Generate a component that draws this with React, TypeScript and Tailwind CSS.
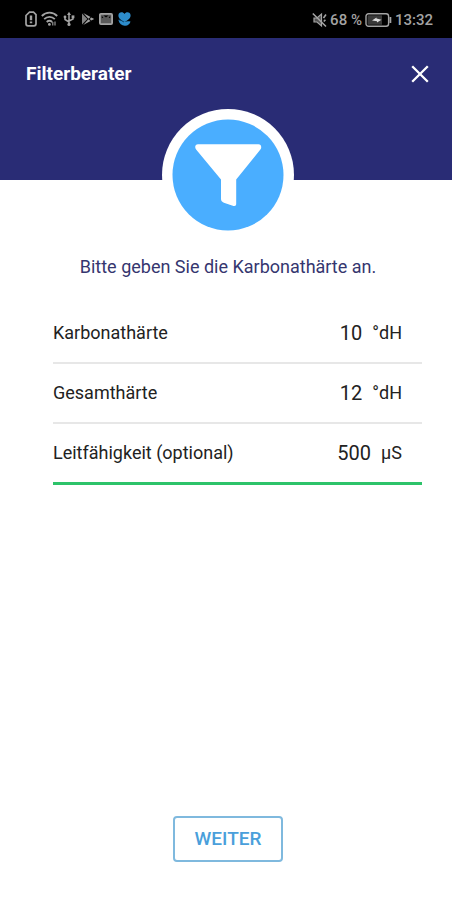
import React, { useState } from 'react';

interface Measurement {
  id: string;
  label: string;
  unit: string;
  initial: string;
}

const measurements: Measurement[] = [
  { id: 'karbonathaerte', label: 'Karbonathärte', unit: '°dH', initial: '10' },
  { id: 'gesamthaerte', label: 'Gesamthärte', unit: '°dH', initial: '12' },
  { id: 'leitfaehigkeit', label: 'Leitfähigkeit (optional)', unit: 'µS', initial: '500' },
];

function SimIcon() {
  return (
    <svg width="12" height="16" viewBox="0 0 12 16" fill="none" stroke="currentColor" strokeWidth="1.7" aria-hidden="true">
      <path d="M4.5 1.2H8.5L11 3.5v9.3a2 2 0 0 1-2 2H3a2 2 0 0 1-2-2V4.5z" />
      <path d="M6 4.5v4.8M6 10.4v1.8" strokeWidth="2.4" />
    </svg>
  );
}

function WifiIcon() {
  return (
    <svg width="18" height="16" viewBox="0 0 18 16" fill="none" stroke="currentColor" strokeWidth="1.8" aria-hidden="true">
      <path d="M.8 5c4.3-4.4 11.1-4.4 15.4 0M3.2 8.2c3-3 7.6-3 10.6 0M5.7 11c1.7-1.5 3.8-1.5 5.5 0" />
      <circle cx="8.4" cy="13.4" r="1.4" fill="currentColor" stroke="none" />
      <path d="M11.8 11v3.4M14 10.5v4" strokeWidth="1.1" />
    </svg>
  );
}

function UsbIcon() {
  return (
    <svg width="14" height="16" viewBox="0 0 14 16" fill="none" stroke="currentColor" strokeWidth="1.5" aria-hidden="true">
      <path d="M6 3v10M2 6v2.5L6 11M10 5.5V8L6 10" />
      <path d="M6 .8 8 4H4z" fill="currentColor" stroke="none" />
      <circle cx="6" cy="13.4" r="1.6" fill="currentColor" stroke="none" />
      <circle cx="2" cy="6" r="1.4" fill="currentColor" stroke="none" />
      <path d="M8.6 4.4h2.8v2.8H8.6z" fill="currentColor" stroke="none" />
    </svg>
  );
}

function PlayStoreIcon() {
  return (
    <svg width="14" height="16" viewBox="0 0 14 16" fill="currentColor" aria-hidden="true">
      <path d="M1 2.4 6.4 8 1 13.6z" fillOpacity="0.8" />
      <path d="M2.2 2 9.6 6 7.4 7.8zM2.2 14l7.4-4-2.2-1.8zM10.4 6.4 13.2 8l-2.8 1.6L8.6 8z" />
    </svg>
  );
}

function MailIcon() {
  return (
    <svg width="14" height="16" viewBox="0 0 14 16" fill="none" stroke="currentColor" strokeWidth="1.8" aria-hidden="true">
      <rect x=".9" y="2.9" width="12.2" height="10.2" rx="1" fill="currentColor" fillOpacity="0.55" />
      <path d="M2.8 5v2.2l1.6-.6zM11.2 5v2.2l-1.6-.6zM4.5 4.4h5L7 6.6z" fill="#000" stroke="none" />
    </svg>
  );
}

function HeartIcon() {
  return (
    <svg width="15" height="16" viewBox="0 0 15 16" fill="#2d8ccb" aria-hidden="true">
      <path d="M7.5 3C6 .4 1.4.9 1.4 4.4c0 3 3 4.8 6.1 6.6 3.1-1.8 6.1-3.6 6.1-6.6C13.6.9 9 .4 7.5 3z" />
      <path d="M1.4 9c2.2.2 4.2 1.2 5.8 2 1.8-.8 4-1 6.3-.4-.6 2.8-3 4.5-5.8 4.2-3-.2-5.4-2-6.3-5.8z" />
      <path d="M1.6 8.6c2 .4 4 1.4 5.4 2.6" fill="none" stroke="#0a4674" strokeWidth="0.7" />
    </svg>
  );
}

function MutedIcon() {
  return (
    <svg width="15" height="16" viewBox="0 0 15 16" fill="none" stroke="currentColor" strokeWidth="1.6" aria-hidden="true">
      <path d="M2 6h3l4.5-4v12L5 10H2z" fill="currentColor" fillOpacity="0.5" strokeWidth="1.2" />
      <path d="M.8 1.5 14 14.5M11.5 6l2.5-3.5M11.8 9.5l1.6-1.7" />
    </svg>
  );
}

function BatteryIcon() {
  return (
    <svg width="27" height="16" viewBox="0 0 27 16" fill="none" stroke="currentColor" strokeWidth="1.4" aria-hidden="true">
      <rect x="1" y="1.7" width="22.6" height="12.6" rx="2.5" />
      <path d="M25.4 5v6" strokeWidth="1.8" />
      <rect x="2.6" y="3.3" width="14.4" height="9.4" fill="currentColor" fillOpacity="0.35" stroke="none" />
      <path d="M7 8.4 11.5 5.4v1.2l5 1.2-4.5 2.8V9.2z" fill="#dcdcdc" stroke="none" />
    </svg>
  );
}

function StatusBar() {
  return (
    <div className="flex h-[38px] items-center justify-between bg-black pr-[19px] pl-[25px] text-[#a3a3a3]">
      <div className="flex items-center gap-1">
        <SimIcon />
        <WifiIcon />
        <UsbIcon />
        <PlayStoreIcon />
        <MailIcon />
        <HeartIcon />
      </div>
      <div className="flex items-center gap-[3px] pt-[2px] text-[15px] leading-5 font-medium">
        <MutedIcon />
        <span>68 %</span>
        <BatteryIcon />
        <span>13:32</span>
      </div>
    </div>
  );
}

function FilterBadge() {
  return (
    <svg className="-mt-[71px]" width="132" height="132" viewBox="0 0 132 132" aria-hidden="true">
      <circle cx="66" cy="66" r="66" fill="#fff" />
      <circle cx="66" cy="66" r="55.5" fill="#4aaeff" />
      <path
        d="M36 35.3h60.5c2.6 0 3.6 3 1.9 5.2L74.2 70.6v24.2c0 1.8-1 2.6-2.7 2.1l-9.6-3.2c-1.8-.7-2.9-1.8-2.9-3.7V70.6L34.1 40.5c-1.8-2.2-.8-5.2 1.9-5.2z"
        fill="#fff"
      />
    </svg>
  );
}

export default function App() {
  const [values, setValues] = useState<Record<string, string>>(
    Object.fromEntries(measurements.map((m) => [m.id, m.initial]))
  );

  return (
    <div className="flex min-h-screen flex-col bg-white font-[Roboto,sans-serif]">
      <StatusBar />

      <header className="flex h-[142px] items-start justify-between bg-[#292c75] pt-6 pr-5 pl-[26px] text-white">
        <h1 className="text-[19px] leading-6 font-bold">Filterberater</h1>
        <button type="button" aria-label="Schließen" className="flex h-6 w-6 items-center justify-center">
          <svg width="18" height="18" viewBox="0 0 18 18" fill="none" stroke="currentColor" strokeWidth="2.3" aria-hidden="true">
            <path d="m1.2 1.2 15.6 15.6M16.8 1.2 1.2 16.8" />
          </svg>
        </button>
      </header>

      <main className="flex flex-1 flex-col items-center pl-1">
        <FilterBadge />
        <p className="mt-[14px] text-center text-[18px] leading-6 text-[#35366f]">
          Bitte geben Sie die Karbonathärte an.
        </p>

        <form className="mt-6 flex w-full flex-1 flex-col" onSubmit={(e) => e.preventDefault()}>
          <div className="mr-[30px] ml-[49px]">
            {measurements.map((m) => (
              <div
                key={m.id}
                className="flex h-[60px] items-center border-b-2 border-[#e7e7e7] pr-5 text-[#222222] first:h-[61px] last:h-[61px] last:border-b-3 last:border-[#2dc36a]"
              >
                <label htmlFor={m.id} className="flex-1 text-[18px] leading-6">
                  {m.label}
                </label>
                <input
                  id={m.id}
                  type="text"
                  inputMode="numeric"
                  value={values[m.id]}
                  onChange={(e) => setValues({ ...values, [m.id]: e.target.value })}
                  className="w-16 bg-transparent text-right text-[20px] leading-6 outline-none"
                />
                <span className="pl-[10px] text-[18px] leading-6">{m.unit}</span>
              </div>
            ))}
          </div>

          <div className="mt-auto flex justify-center pb-[38px]">
            <button
              type="submit"
              className="h-[46px] rounded-[4px] border-2 border-[#7fb9de] px-5 text-[19px] leading-6 font-medium text-[#4a9fdb]"
            >
              WEITER
            </button>
          </div>
        </form>
      </main>
    </div>
  );
}
